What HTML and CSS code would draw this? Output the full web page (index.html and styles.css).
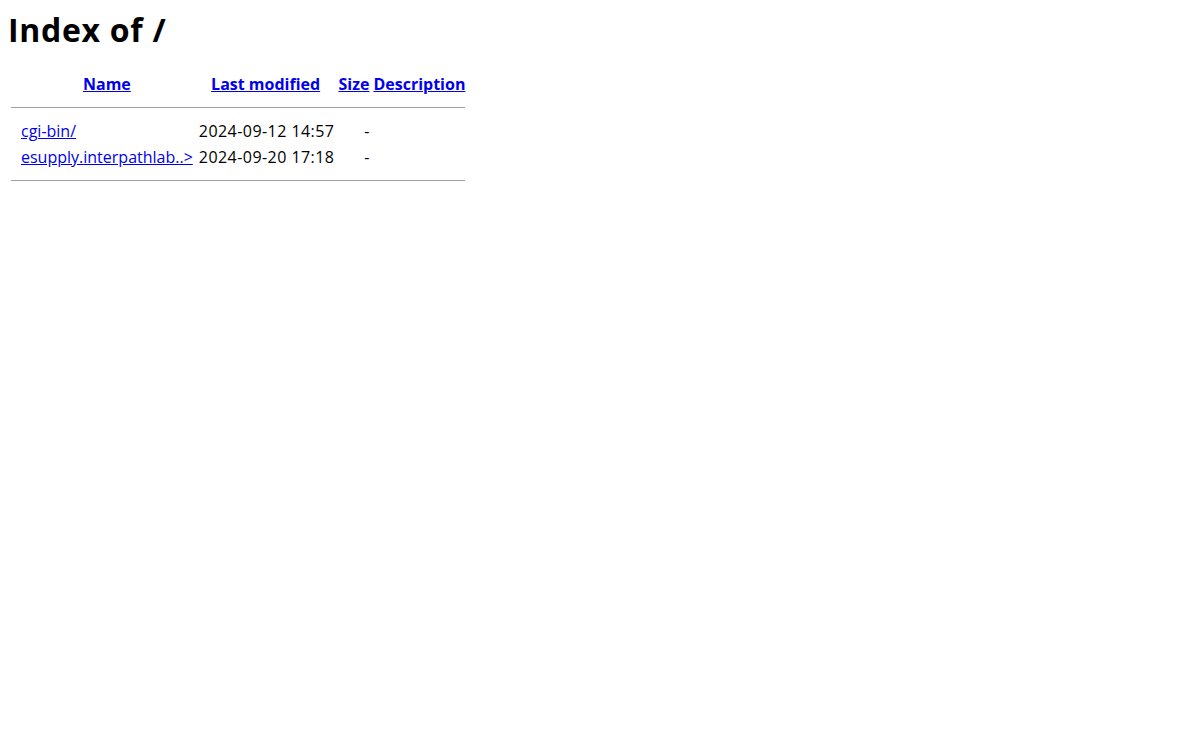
FILE: index.html
```html
<!DOCTYPE html>
<html>
<head>
    <meta charset="UTF-8">
    <title>Index of /</title>
    <link rel="stylesheet" href="styles.css">
</head>
<body>
<h1>Index of /</h1>
<table>
    <tr>
        <th class="ico"></th>
        <th><a href="?C=N;O=D">Name</a></th>
        <th><a href="?C=M;O=A">Last modified</a></th>
        <th><a href="?C=S;O=A">Size</a></th>
        <th><a href="?C=D;O=A">Description</a></th>
    </tr>
    <tr><th colspan="5"><hr></th></tr>
    <tr>
        <td class="ico"></td>
        <td><a href="cgi-bin/">cgi-bin/</a></td>
        <td class="date">2024-09-12 14:57</td>
        <td class="size">-</td>
        <td>&nbsp;</td>
    </tr>
    <tr>
        <td class="ico"></td>
        <td><a href="esupply.interpathlab.com/">esupply.interpathlab..&gt;</a></td>
        <td class="date">2024-09-20 17:18</td>
        <td class="size">-</td>
        <td>&nbsp;</td>
    </tr>
    <tr><th colspan="5"><hr></th></tr>
</table>
</body>
</html>
```

FILE: styles.css
```css
body {
    margin: 8px;
    font-family: "Open Sans", "Noto Sans", sans-serif;
    font-size: 16px;
    color: #000;
    background: #fff;
}

h1 {
    font-size: 32px;
    font-weight: bold;
    letter-spacing: 0.7px;
    margin: 0 0 18px 0;
    line-height: 44px;
}

table {
    border-spacing: 2px;
}

th, td {
    padding: 1px;
    line-height: 22px;
}

th a {
    font-weight: bold;
}

a {
    color: #0000ee;
}

.ico {
    width: 6px;
}

.date {
    text-align: right;
    letter-spacing: 0.45px;
    padding-left: 3px;
}

.size {
    text-align: right;
    padding-right: 1px;
}

hr {
    border: none;
    border-top: 1px solid #a0a0a0;
    margin: 8px 0;
}
```
